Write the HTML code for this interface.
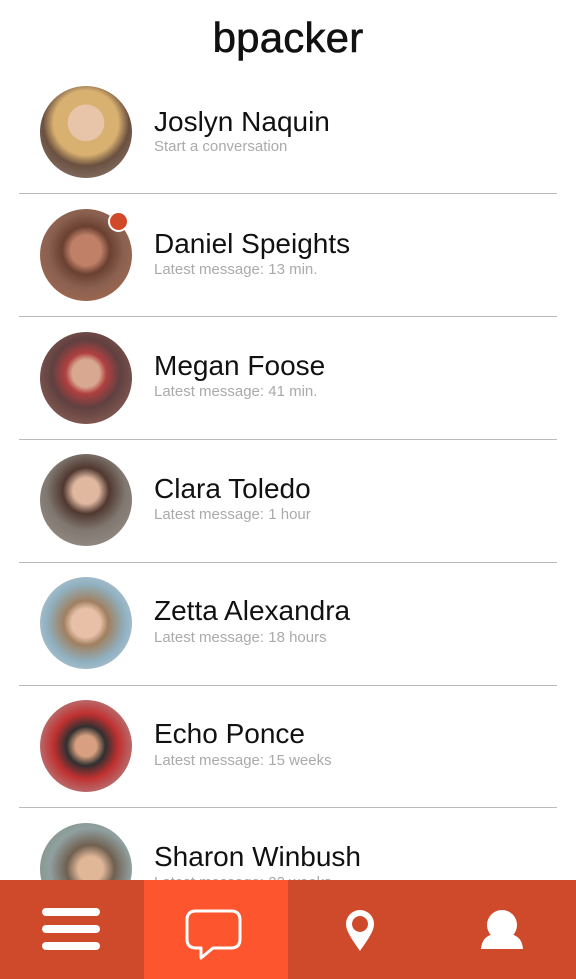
<!DOCTYPE html>
<html><head><meta charset="utf-8"><style>
*{margin:0;padding:0;box-sizing:border-box}
body{width:576px;height:979px;overflow:hidden;background:#fff;font-family:"Liberation Sans",sans-serif;position:relative}
.logo{position:absolute;top:10px;left:0;width:576px;text-align:center;font-size:42px;letter-spacing:0.2px;color:#111;-webkit-text-stroke:0.6px #111;line-height:56px}
.av{position:absolute;left:40px;width:92px;height:92px;border-radius:50%}
.name{position:absolute;left:154px;font-size:28px;color:#111;line-height:32px}
.sub{position:absolute;left:154px;font-size:15px;color:#aaa;line-height:18px}
.sep{position:absolute;left:19px;width:538px;height:1px;background:#bbb}
.bar{position:absolute;left:0;top:880px;width:576px;height:99px;background:#cf4a2a}
.act{position:absolute;left:144px;top:0;width:144px;height:99px;background:#fd552e}
</style></head><body>
<div class="logo">bpacker</div>

<div class="av" style="top:86px;background:radial-gradient(circle at 50% 40%,#e8c4a8 0 25%,#d8b070 26% 45%,#6a5040 60%,#9a8a80 100%)"></div>
<div class="name" style="top:106px">Joslyn Naquin</div>
<div class="sub" style="top:138px">Start a conversation</div>
<div class="sep" style="top:193px"></div>

<div class="av" style="top:209px;background:radial-gradient(circle at 50% 45%,#c08068 0 22%,#6a4030 35%,#8a6050 55%,#b07050 100%)"></div>
<div style="position:absolute;left:108px;top:211px;width:21px;height:21px;border-radius:50%;background:#d04a2a;border:2px solid #fff"></div>
<div class="name" style="top:228px">Daniel Speights</div>
<div class="sub" style="top:261px">Latest message: 13 min.</div>
<div class="sep" style="top:316px"></div>

<div class="av" style="top:332px;background:radial-gradient(circle at 50% 45%,#d8a890 0 20%,#b04040 30%,#604040 50%,#a07060 100%)"></div>
<div class="name" style="top:350px">Megan Foose</div>
<div class="sub" style="top:383px">Latest message: 41 min.</div>
<div class="sep" style="top:439px"></div>

<div class="av" style="top:454px;background:radial-gradient(circle at 50% 40%,#e0b8a0 0 18%,#503830 32%,#807870 55%,#a09890 100%)"></div>
<div class="name" style="top:473px">Clara Toledo</div>
<div class="sub" style="top:506px">Latest message: 1 hour</div>
<div class="sep" style="top:562px"></div>

<div class="av" style="top:577px;background:radial-gradient(circle at 50% 50%,#e8c0a8 0 22%,#a08060 34%,#90b0c0 60%,#d0d8e0 100%)"></div>
<div class="name" style="top:595px">Zetta Alexandra</div>
<div class="sub" style="top:629px">Latest message: 18 hours</div>
<div class="sep" style="top:685px"></div>

<div class="av" style="top:700px;background:radial-gradient(circle at 50% 50%,#d8a080 0 16%,#303030 30%,#c03030 50%,#b0b8b8 100%)"></div>
<div class="name" style="top:718px">Echo Ponce</div>
<div class="sub" style="top:752px">Latest message: 15 weeks</div>
<div class="sep" style="top:807px"></div>

<div class="av" style="top:823px;background:radial-gradient(circle at 55% 50%,#e0b898 0 18%,#706050 35%,#90a0a0 60%,#7a8a70 100%)"></div>
<div class="name" style="top:841px">Sharon Winbush</div>
<div class="sub" style="top:874px">Latest message: 22 weeks</div>

<div class="bar">
 <div class="act"></div>
 <svg style="position:absolute;left:0;top:0" width="576" height="99">
  <g stroke="#fff" stroke-width="8" stroke-linecap="round">
   <line x1="46" y1="32" x2="96" y2="32"/><line x1="46" y1="49" x2="96" y2="49"/><line x1="46" y1="66" x2="96" y2="66"/>
  </g>
  <path d="M196 31 H231 Q240 31 240 40 V59 Q240 68 231 68 H213 L201 78 V68 H196 Q187 68 187 59 V40 Q187 31 196 31 Z" fill="none" stroke="#fff" stroke-width="3" stroke-linejoin="round"/>
  <path d="M360 30 a14 14 0 0 1 14 14 c0 8 -8 18 -14 27 c-6 -9 -14 -19 -14 -27 a14 14 0 0 1 14 -14 z M360 36 a8 8 0 1 0 0.01 0 z" fill="#fff" fill-rule="evenodd"/>
  <circle cx="502" cy="45" r="15" fill="#fff"/>
  <path d="M481 69 Q482 56 494 54 Q502 60 510 54 Q522 56 523 69 Z" fill="#fff"/>
 </svg>
</div>
</body></html>
